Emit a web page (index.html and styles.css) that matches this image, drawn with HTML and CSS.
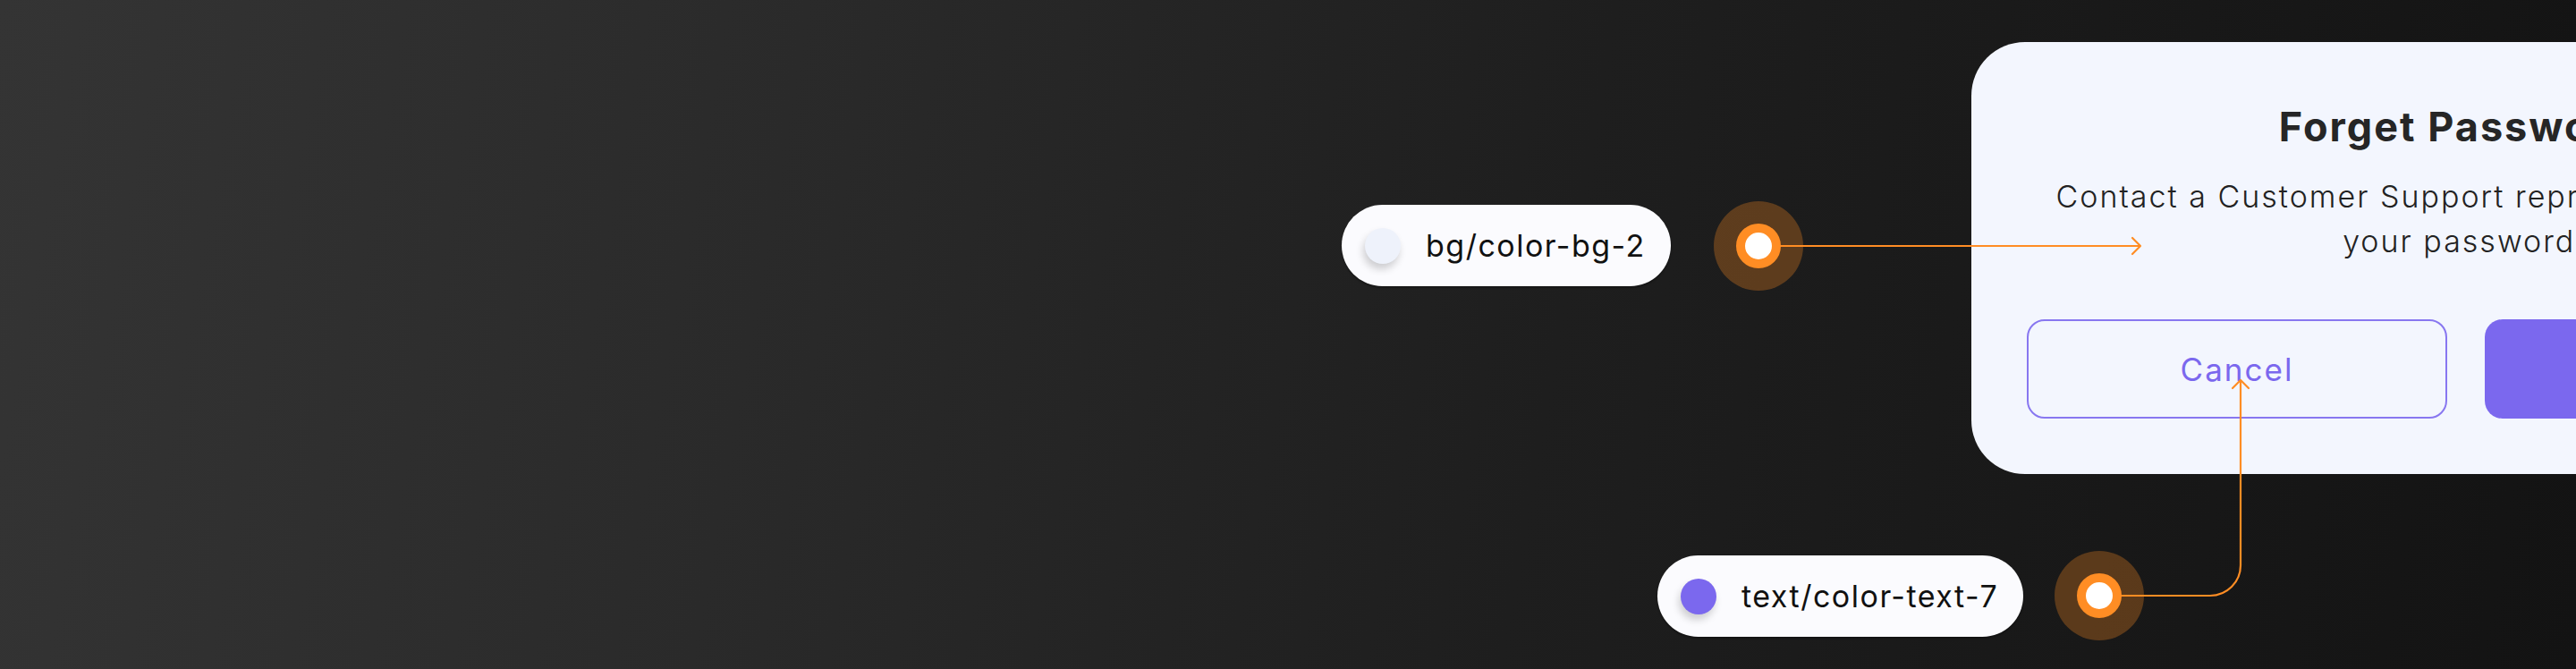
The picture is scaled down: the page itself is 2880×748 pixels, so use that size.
FILE: index.html
```html
<!DOCTYPE html>
<html lang="en">
<head>
<meta charset="UTF-8">
<meta name="viewport" content="width=device-width, initial-scale=1.0">
<title>Colour tokens - Forget Password</title>
<link rel="stylesheet" href="styles.css">
</head>
<body>
<div class="stage">

  <div class="card">
    <h2 class="card-title">Forget Password</h2>
    <p class="card-text">Contact a Customer Support representative to reset<br>your password.</p>
    <div class="card-actions">
      <button class="btn btn-outline">Cancel</button>
      <button class="btn btn-fill">Contact</button>
    </div>
  </div>

  <!-- wires from the token pins to the parts they describe -->
  <svg class="wires" width="2880" height="748" viewBox="0 0 2880 748">
    <path d="M1991 275 H2392"/>
    <path d="M2384 266 L2393 275 L2384 284"/>
    <path d="M2372 666 H2471 A34 34 0 0 0 2505 632 V426"/>
    <path d="M2496 434 L2505 425 L2514 434"/>
  </svg>

  <div class="tag tag-bg"><span class="swatch swatch-bg"></span>bg/color-bg-2</div>
  <div class="pin pin-bg"></div>

  <div class="tag tag-text"><span class="swatch swatch-text"></span>text/color-text-7</div>
  <div class="pin pin-text"></div>
</div>
</body>
</html>
```

FILE: styles.css
```css
body {
  margin: 0;
  padding: 0;
  font-family: Inter, "Liberation Sans", sans-serif;
  background: linear-gradient(100deg, #343434 0%, #2a2a2a 30%, #1e1e1e 60%, #131313 100%);
  overflow: hidden;
}

.stage {
  position: relative;
  width: 2880px;
  height: 748px;
  overflow: hidden;
}

/* dialog being annotated */
.card {
  position: absolute;
  left: 2204px;
  top: 47px;
  width: 1102px;
  height: 483px;
  box-sizing: border-box;
  padding: 65px 62px 62px;
  display: flex;
  flex-direction: column;
  align-items: center;
  border-radius: 60px;
  background-color: #f3f6fe;
}

.card-title {
  margin: 0 16px 0 0;
  font-size: 45px;
  line-height: 60px;
  font-weight: 700;
  letter-spacing: 2px;
  color: #262626;
}

.card-text {
  margin: 23px 0 0;
  font-size: 34px;
  line-height: 50px;
  font-weight: 300;
  letter-spacing: 2px;
  color: #222;
  text-align: center;
}

.card-actions {
  margin-top: auto;
  width: 100%;
  display: flex;
  gap: 42px;
}

.btn {
  flex: 1;
  height: 111px;
  border-radius: 20px;
  font-family: inherit;
  font-size: 35px;
  letter-spacing: 2px;
  box-sizing: border-box;
}

.btn-outline {
  border: 2px solid #8877f0;
  background: transparent;
  color: #7b68ee;
}

.btn-fill {
  border: none;
  background-color: #7b68ee;
  color: #fff;
}

/* annotation wires */
.wires {
  position: absolute;
  left: 0;
  top: 0;
  fill: none;
  stroke: #ff8d24;
  stroke-width: 2.2;
  stroke-linecap: round;
  stroke-linejoin: round;
}

.tag {
  position: absolute;
  height: 91px;
  box-sizing: border-box;
  padding: 0 28px 0 26px;
  display: flex;
  align-items: center;
  gap: 28px;
  border-radius: 46px;
  background-color: #fbfbfe;
  box-shadow: 0 2px 2px rgba(0, 0, 0, 0.3);
  font-size: 34px;
  letter-spacing: 1.5px;
  color: #111;
}

.tag-bg {
  left: 1500px;
  top: 229px;
}

.tag-text {
  left: 1853px;
  top: 621px;
}

.swatch {
  width: 40px;
  height: 40px;
  border-radius: 50%;
  box-shadow: -2px 6px 8px rgba(0, 0, 0, 0.18);
}

.swatch-bg {
  background-color: #eef2fb;
}

.swatch-text {
  background-color: #7b68ee;
}

.pin {
  position: absolute;
  width: 100px;
  height: 100px;
  border-radius: 50%;
  background-color: rgba(255, 141, 36, 0.29);
  display: flex;
  align-items: center;
  justify-content: center;
}

.pin::after {
  content: "";
  width: 30px;
  height: 30px;
  border: 10px solid #ff8d24;
  border-radius: 50%;
  background-color: #fff;
}

.pin-bg {
  left: 1916px;
  top: 225px;
}

.pin-text {
  left: 2297px;
  top: 616px;
}
```
